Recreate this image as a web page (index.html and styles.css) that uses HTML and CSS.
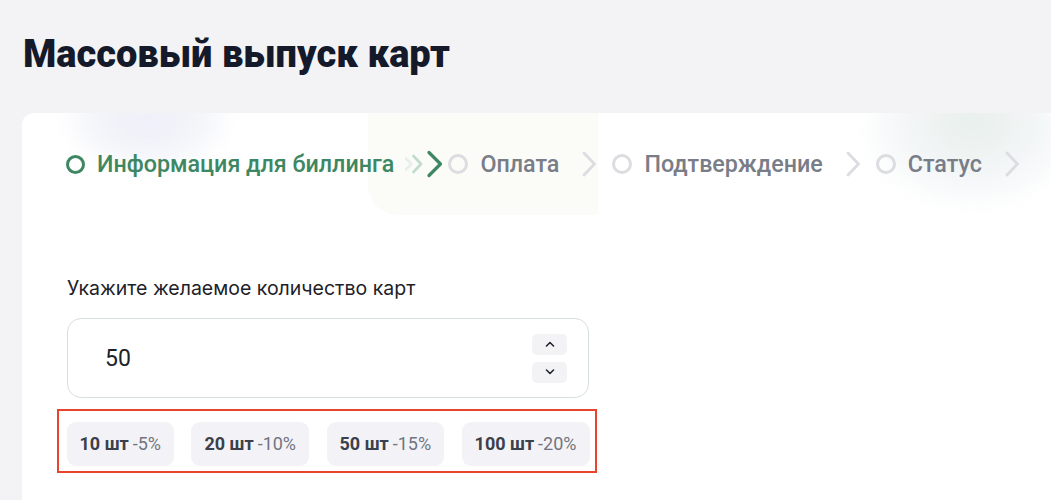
FILE: index.html
```html
<!DOCTYPE html>
<html lang="ru">
<head>
<meta charset="utf-8">
<title>Массовый выпуск карт</title>
<link rel="stylesheet" href="styles.css">
</head>
<body>
<main class="page">
  <h1 class="title">Массовый выпуск карт</h1>
  <section class="card">
    <div class="decor decor-a"></div>
    <div class="decor decor-b"></div>
    <div class="decor decor-c"></div>
    <nav class="steps">
      <div class="step active">
        <span class="dot"></span>
        <span class="step-label">Информация для биллинга</span>
      </div>
      <svg class="chev chev-anim" width="40" height="28" viewBox="0 0 40 28">
        <path d="M3 8.5L8.5 14 3 19.5" fill="none" stroke="#e6efea" stroke-width="2.5" stroke-linecap="round" stroke-linejoin="round"/>
        <path d="M10.5 6L18 14 10.5 22" fill="none" stroke="#c3dccf" stroke-width="2.8" stroke-linecap="round" stroke-linejoin="round"/>
        <path d="M26 2.5L37.5 14 26 25.5" fill="none" stroke="#3d8762" stroke-width="3.2" stroke-linecap="round" stroke-linejoin="round"/>
      </svg>
      <div class="step">
        <span class="dot"></span>
        <span class="step-label">Оплата</span>
      </div>
      <svg class="chev" width="16" height="28" viewBox="0 0 16 28">
        <path d="M3 3L13.5 14 3 25" fill="none" stroke="#dcdce1" stroke-width="2.8" stroke-linecap="round" stroke-linejoin="round"/>
      </svg>
      <div class="step">
        <span class="dot"></span>
        <span class="step-label">Подтверждение</span>
      </div>
      <svg class="chev" width="16" height="28" viewBox="0 0 16 28">
        <path d="M3 3L13.5 14 3 25" fill="none" stroke="#dcdce1" stroke-width="2.8" stroke-linecap="round" stroke-linejoin="round"/>
      </svg>
      <div class="step">
        <span class="dot"></span>
        <span class="step-label">Статус</span>
      </div>
      <svg class="chev" width="16" height="28" viewBox="0 0 16 28">
        <path d="M3 3L13.5 14 3 25" fill="none" stroke="#dcdce1" stroke-width="2.8" stroke-linecap="round" stroke-linejoin="round"/>
      </svg>
    </nav>

    <div class="form">
      <label class="field-label">Укажите желаемое количество карт</label>
      <div class="number-input">
        <span class="value">50</span>
        <div class="spin">
          <button class="spin-btn" type="button">
            <svg width="10" height="6" viewBox="0 0 10 6"><path d="M1.5 5L5 1.5 8.5 5" fill="none" stroke="#22262e" stroke-width="1.6" stroke-linecap="round" stroke-linejoin="round"/></svg>
          </button>
          <button class="spin-btn" type="button">
            <svg width="10" height="6" viewBox="0 0 10 6"><path d="M1.5 1L5 4.5 8.5 1" fill="none" stroke="#22262e" stroke-width="1.6" stroke-linecap="round" stroke-linejoin="round"/></svg>
          </button>
        </div>
      </div>
      <div class="presets">
        <button class="chip" type="button"><b>10 шт</b> <span>-5%</span></button>
        <button class="chip" type="button"><b>20 шт</b> <span>-10%</span></button>
        <button class="chip" type="button"><b>50 шт</b> <span>-15%</span></button>
        <button class="chip" type="button"><b>100 шт</b> <span>-20%</span></button>
      </div>
    </div>
  </section>
</main>
</body>
</html>
```

FILE: styles.css
```css
* { box-sizing: border-box; }

html, body {
  margin: 0;
  padding: 0;
  background: #f3f3f6;
  font-family: Roboto, "Noto Sans", "Liberation Sans", sans-serif;
  overflow: hidden;
}

.page {
  padding: 30px 0 0 22px;
}

.title {
  margin: 0 0 0 1px;
  font-size: 38px;
  line-height: 48px;
  font-weight: 900;
  color: #141a2a;
}

.card {
  position: relative;
  margin-top: 35px;
  background: #ffffff;
  border-radius: 12px 0 0 0;
  padding: 30px 0 40px 44px;
  min-height: 400px;
  overflow: hidden;
}

.decor {
  position: absolute;
  pointer-events: none;
}
.decor-a {
  left: 40px; top: -50px; width: 170px; height: 110px;
  border-radius: 50%;
  filter: blur(8px);
  background: radial-gradient(ellipse at center, #eeeff8 0%, #f4f5fa 45%, rgba(255,255,255,0) 75%);
}
.decor-b {
  left: 346px; top: 0; width: 230px; height: 102px;
  border-radius: 0 0 4px 30px;
  background: #fbfbf8;
}
.decor-c {
  left: 835px; top: -30px; width: 210px; height: 130px;
  border-radius: 50%;
  filter: blur(6px);
  background: radial-gradient(ellipse at 55% 30%, #e8efeb 0%, #f3f6f7 40%, rgba(255,255,255,0) 72%);
}

.steps {
  position: relative;
  display: flex;
  align-items: center;
  height: 42px;
  white-space: nowrap;
}

.step {
  display: flex;
  align-items: center;
  gap: 12px;
}

.dot {
  width: 20px;
  height: 20px;
  border-radius: 50%;
  border: 3px solid #dcdce1;
  flex: none;
}
.step.active .dot {
  width: 19px;
  height: 19px;
  border: 3.5px solid #3d8762;
}

.step-label {
  font-size: 23.3px;
  font-weight: 500;
  color: #787d88;
}
.step.active .step-label {
  color: #3d8762;
}

.chev { flex: none; margin: 0 15px 0 22px; }
.chev-anim { margin: 0 5px 0 9px; }

.form {
  position: relative;
  margin-top: 91px;
  width: 522px;
  margin-left: 1px;
}

.field-label {
  display: block;
  font-family: Inter, Roboto, sans-serif;
  font-size: 19.5px;
  line-height: 24px;
  color: #1d2129;
  margin-bottom: 18px;
}

.number-input {
  display: flex;
  align-items: center;
  justify-content: space-between;
  height: 80px;
  border: 1px solid #d6e0db;
  border-radius: 14px;
  padding: 0 21px 0 37px;
}

.value {
  font-size: 23px;
  color: #1d2129;
}

.spin {
  display: flex;
  flex-direction: column;
  gap: 7px;
}

.spin-btn {
  width: 35px;
  height: 21px;
  border: 0;
  border-radius: 5px;
  background: #f3f3f6;
  display: flex;
  align-items: center;
  justify-content: center;
  padding: 0;
}

.presets {
  display: flex;
  justify-content: space-between;
  margin: 11px -8px 0 -10px;
  padding: 10.5px 5.5px 5.5px 7.5px;
  border: 2.5px solid #e8432c;
}

.chip {
  height: 44px;
  border: 0;
  border-radius: 9px;
  background: #f3f3f7;
  padding: 0 13px;
  font-family: inherit;
  font-size: 18px;
  color: #3b404a;
  display: flex;
  align-items: center;
  gap: 4px;
}
.chip b { font-weight: 700; }
.chip span { color: #70757f; font-weight: 400; }
```
